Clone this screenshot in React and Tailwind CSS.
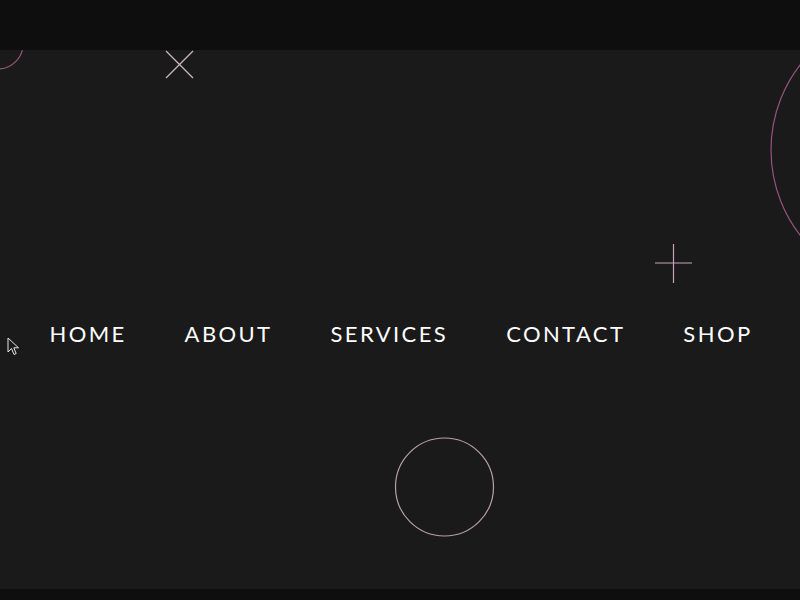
export default function App() {
  const items = ["HOME", "ABOUT", "SERVICES", "CONTACT", "SHOP"];
  return (
    <div className="w-[800px] h-[600px] flex flex-col bg-[#0e0e0e] overflow-hidden" style={{ fontFamily: "Lato, 'Open Sans', sans-serif" }}>
      <div className="h-[50px] shrink-0 bg-[#0e0e0e]" />
      <main className="relative h-[539px] shrink-0 bg-[#1a1a1a] overflow-hidden">
        <svg className="absolute left-0 top-0 pointer-events-none" width="800" height="539" viewBox="0 0 800 539" fill="none">
          <circle cx="-2" cy="-6" r="25" stroke="#94577a" strokeWidth="1.2" />
          <line x1="166" y1="1" x2="193" y2="28" stroke="#c7b8c0" strokeWidth="1.2" />
          <line x1="193" y1="1" x2="166" y2="28" stroke="#c7b8c0" strokeWidth="1.2" />
          <circle cx="910" cy="100" r="139" stroke="#93557a" strokeWidth="1.2" />
          <line x1="655" y1="213" x2="692" y2="213" stroke="#c9a3b6" strokeWidth="1.2" />
          <line x1="673.5" y1="194" x2="673.5" y2="233" stroke="#c9a3b6" strokeWidth="1.2" />
          <circle cx="444.5" cy="437" r="49" stroke="#b79fab" strokeWidth="1.2" />
        </svg>
        <nav className="relative flex justify-center gap-[58px] pt-[266px] pl-[2px]">
          {items.map((t) => (
            <a key={t} className="text-white text-[22px] leading-[36px] tracking-[2.4px] font-normal">
              {t}
            </a>
          ))}
        </nav>
        <svg className="absolute left-[7px] top-[287px]" width="13" height="20" viewBox="0 0 13 20">
          <path d="M1 1 L1 15 L4.5 11.5 L7 17.5 L9.2 16.5 L6.8 10.8 L11.5 10.8 Z" fill="#1a1a1a" stroke="#e6e6e6" strokeWidth="1" strokeLinejoin="round" />
        </svg>
      </main>
      <div className="flex-1 bg-[#0e0e0e]" />
    </div>
  );
}
